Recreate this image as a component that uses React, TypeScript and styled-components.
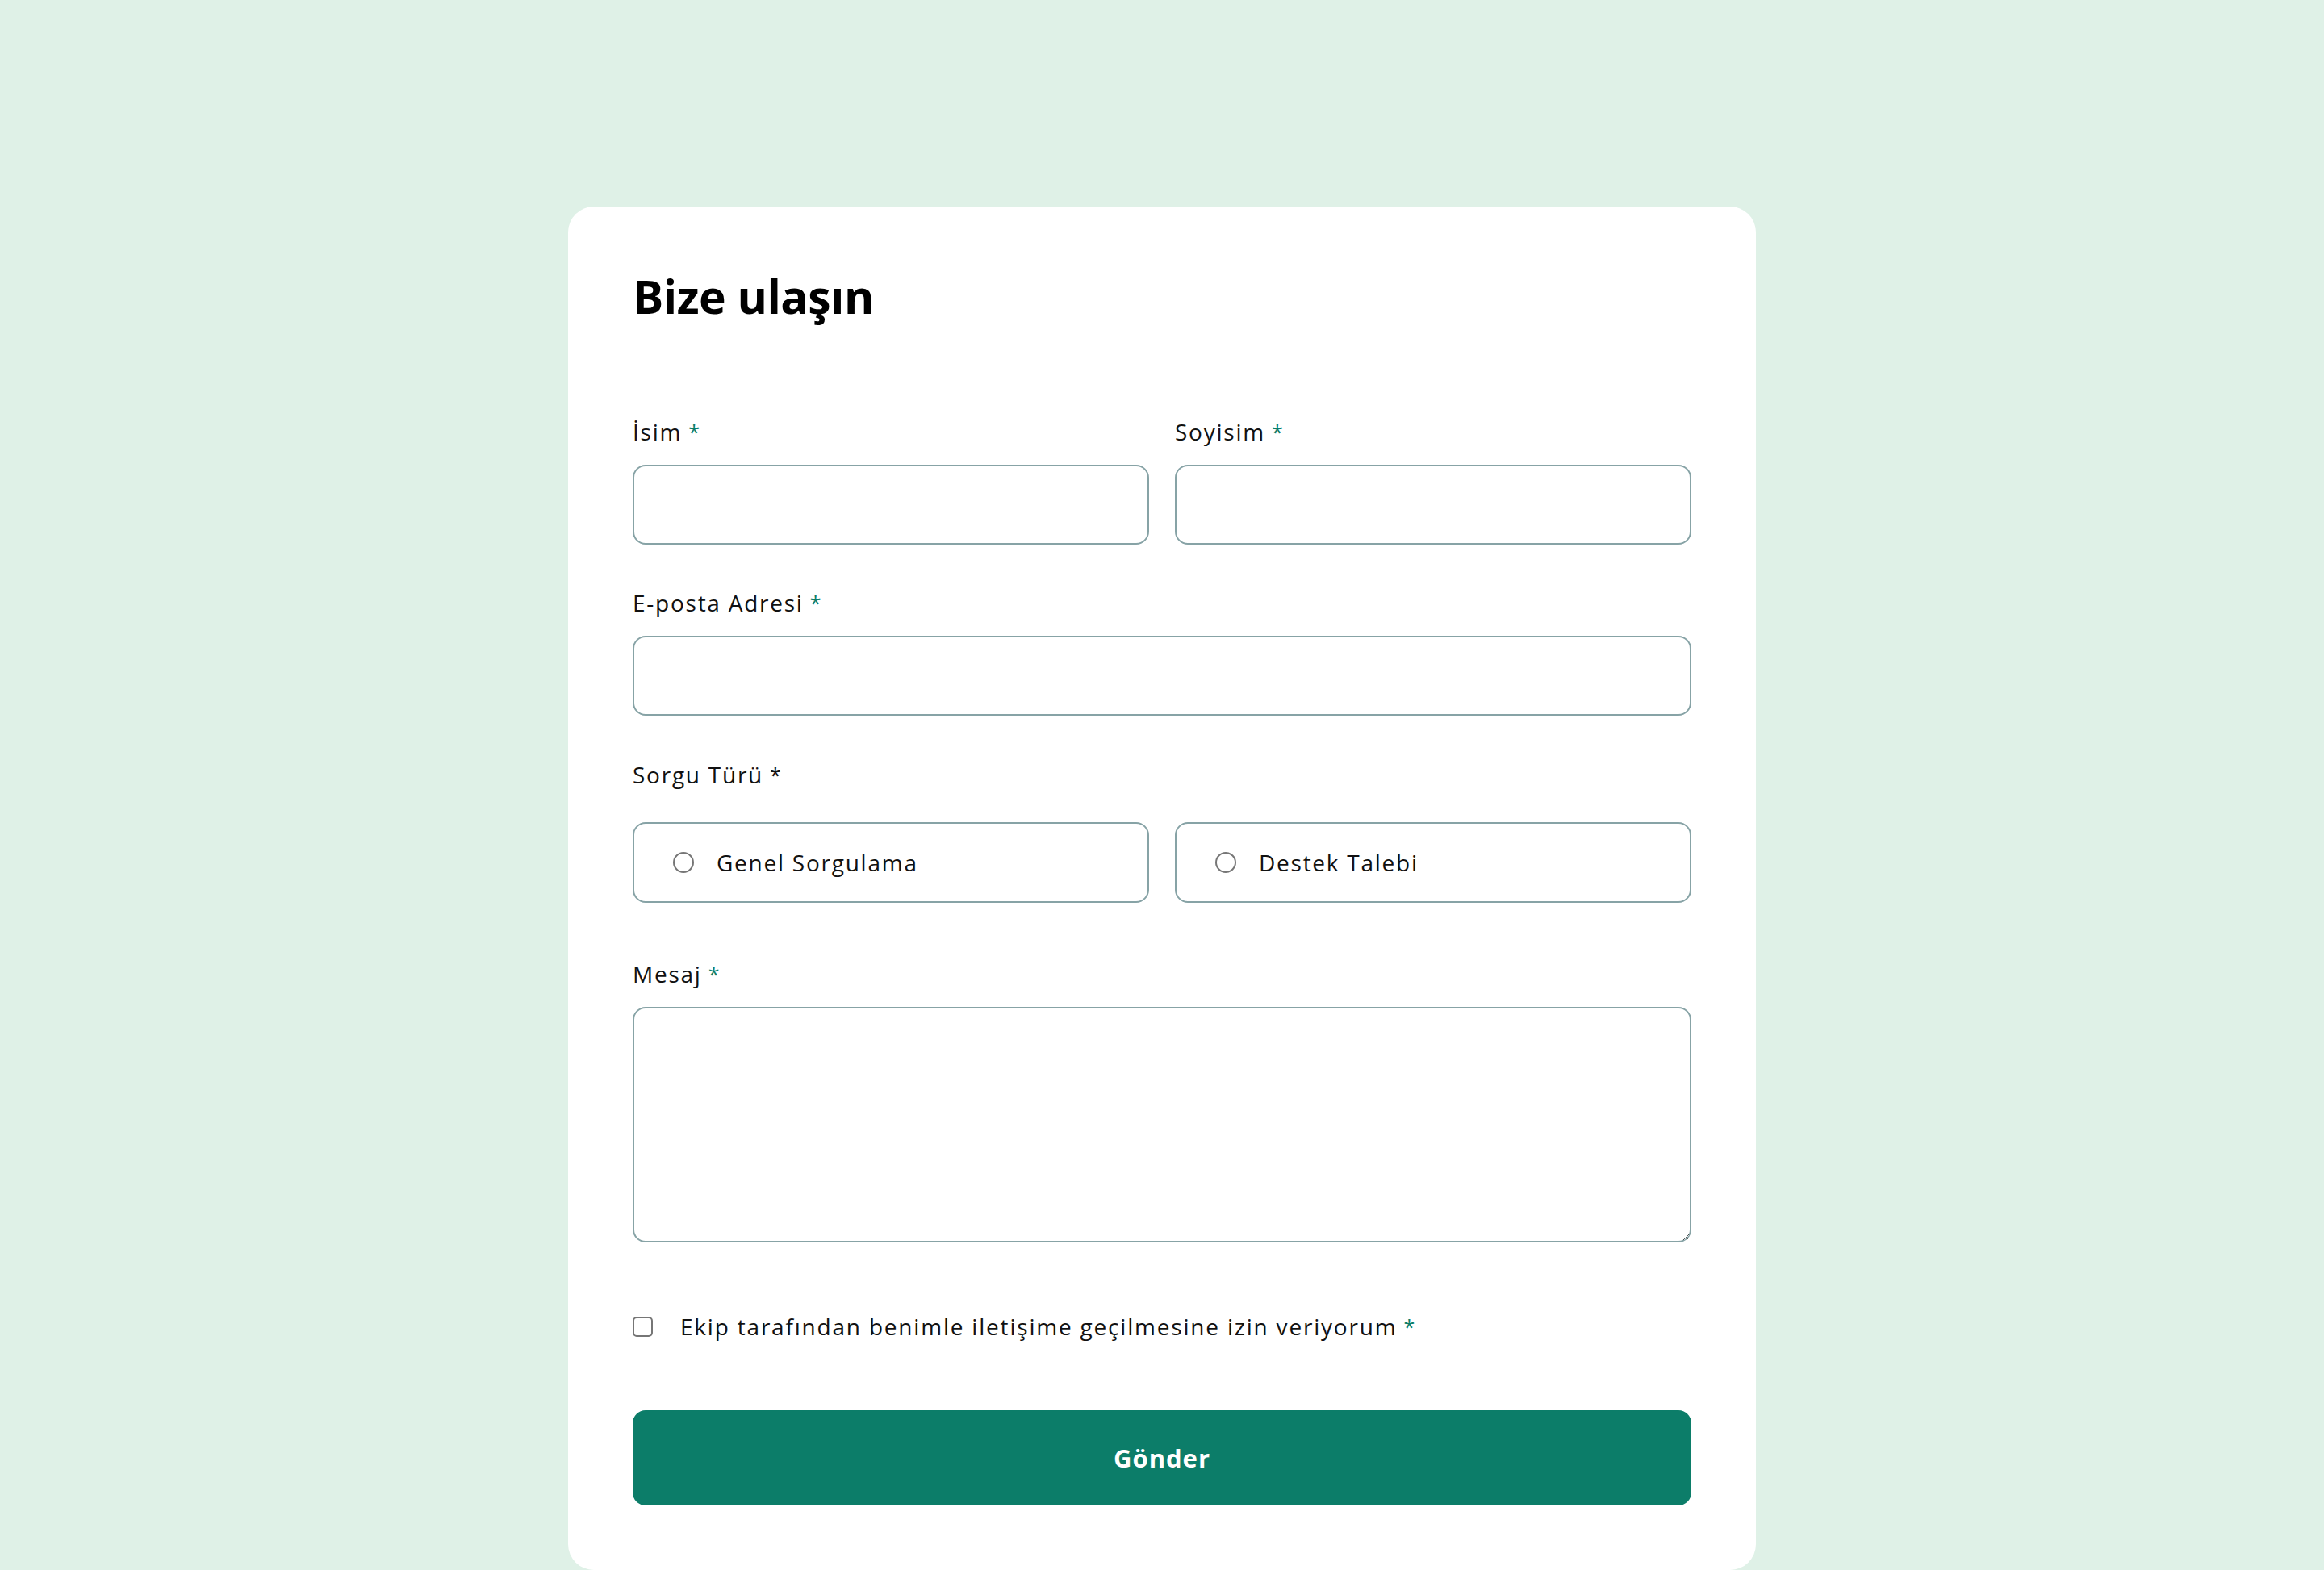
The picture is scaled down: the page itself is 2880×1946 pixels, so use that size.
import React from "react";
import styled, { createGlobalStyle } from "styled-components";

const GlobalStyle = createGlobalStyle`
  * { box-sizing: border-box; }
  html, body { margin: 0; padding: 0; }
  body {
    background: #dff1e7;
    font-family: "Open Sans", "Noto Sans", sans-serif;
    color: #111;
  }
`;

const Page = styled.main`
  min-height: 100vh;
  padding-top: 256px;
  display: flex;
  justify-content: center;
  align-items: flex-start;
`;

const Card = styled.form`
  width: 1472px;
  background: #ffffff;
  border-radius: 32px;
  padding: 80px;
  display: flex;
  flex-direction: column;
`;

const Title = styled.h1`
  margin: 3px 0 0;
  font-size: 57px;
  line-height: 57px;
  font-weight: 700;
  color: #000;
  letter-spacing: -0.5px;
`;

const Fields = styled.div`
  margin-top: 120px;
  display: flex;
  flex-direction: column;
`;

const Row = styled.div`
  display: grid;
  grid-template-columns: 1fr 1fr;
  column-gap: 32px;
`;

const Field = styled.div<{ $gap?: number }>`
  display: flex;
  flex-direction: column;
  margin-top: ${(p) => p.$gap ?? 0}px;
`;

const Label = styled.label<{ $space?: number }>`
  font-size: 28px;
  line-height: 38px;
  letter-spacing: 1.75px;
  color: #111;
  margin-bottom: ${(p) => p.$space ?? 22}px;
`;

const Star = styled.span<{ $plain?: boolean }>`
  color: ${(p) => (p.$plain ? "#111" : "#0c7d69")};
  margin-left: 8px;
  font-size: 25px;
  vertical-align: 1px;
`;

const TextInput = styled.input`
  height: 99px;
  width: 100%;
  border: 2px solid #87a3a6;
  border-radius: 16px;
  background: #fff;
  padding: 0 48px;
  font-family: inherit;
  font-size: 28px;
  outline: none;
`;

const TextArea = styled.textarea`
  height: 292px;
  width: 100%;
  border: 2px solid #87a3a6;
  border-radius: 16px;
  background: #fff;
  padding: 24px 48px;
  font-family: inherit;
  font-size: 28px;
  outline: none;
  resize: vertical;
  display: block;
`;

const RadioBox = styled.label`
  height: 100px;
  border: 2px solid #87a3a6;
  border-radius: 16px;
  display: flex;
  align-items: center;
  padding-left: 48px;
  gap: 28px;
  font-size: 28px;
  letter-spacing: 1.75px;
  color: #111;
  cursor: pointer;
`;

const Radio = styled.input`
  appearance: none;
  margin: 0;
  width: 26px;
  height: 26px;
  border: 2px solid #767676;
  border-radius: 50%;
  background: #fff;
  flex: none;
`;

const ConsentRow = styled.label`
  margin-top: 85px;
  display: flex;
  align-items: center;
  gap: 34px;
  font-size: 28px;
  line-height: 38px;
  letter-spacing: 1.8px;
  color: #111;
`;

const Check = styled.input`
  appearance: none;
  margin: 0;
  width: 25px;
  height: 25px;
  border: 2px solid #767676;
  border-radius: 5px;
  background: #fff;
  flex: none;
`;

const Submit = styled.button`
  margin-top: 85px;
  height: 118px;
  width: 100%;
  border: none;
  border-radius: 16px;
  background: #0c7d69;
  color: #fff;
  font-family: "Open Sans", sans-serif;
  font-weight: 700;
  font-size: 31px;
  letter-spacing: 1px;
  cursor: pointer;
`;

export default function App() {
  return (
    <>
      <GlobalStyle />
      <Page>
        <Card onSubmit={(e) => e.preventDefault()}>
          <Title>Bize ulaşın</Title>
          <Fields>
            <Row>
              <Field>
                <Label htmlFor="isim">
                  İsim<Star>*</Star>
                </Label>
                <TextInput id="isim" type="text" />
              </Field>
              <Field>
                <Label htmlFor="soyisim">
                  Soyisim<Star>*</Star>
                </Label>
                <TextInput id="soyisim" type="text" />
              </Field>
            </Row>
            <Field $gap={53}>
              <Label htmlFor="eposta">
                E-posta Adresi<Star>*</Star>
              </Label>
              <TextInput id="eposta" type="email" />
            </Field>
            <Field $gap={54}>
              <Label as="span" $space={40}>
                Sorgu Türü<Star $plain>*</Star>
              </Label>
              <Row>
                <RadioBox>
                  <Radio type="radio" name="tur" />
                  Genel Sorgulama
                </RadioBox>
                <RadioBox>
                  <Radio type="radio" name="tur" />
                  Destek Talebi
                </RadioBox>
              </Row>
            </Field>
            <Field $gap={69}>
              <Label htmlFor="mesaj">
                Mesaj<Star>*</Star>
              </Label>
              <TextArea id="mesaj" />
            </Field>
            <ConsentRow>
              <Check type="checkbox" />
              <span>
                Ekip tarafından benimle iletişime geçilmesine izin veriyorum
                <Star>*</Star>
              </span>
            </ConsentRow>
            <Submit type="submit">Gönder</Submit>
          </Fields>
        </Card>
      </Page>
    </>
  );
}
